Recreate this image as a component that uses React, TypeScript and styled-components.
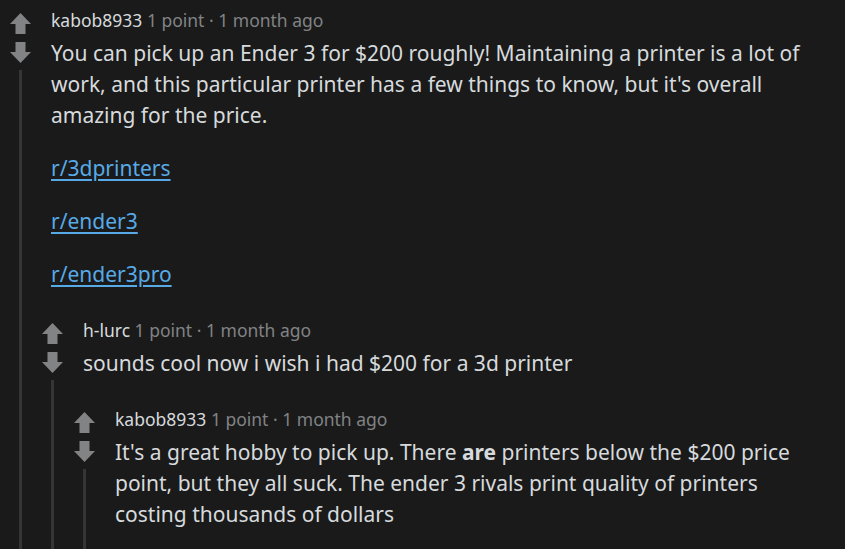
import React from "react";
import styled, { createGlobalStyle } from "styled-components";

const Global = createGlobalStyle`
  html, body {
    margin: 0;
    padding: 0;
    background: #1a1a1b;
    overflow: hidden;
  }
  body {
    font-family: "Noto Sans", "Open Sans", sans-serif;
    color: #d7dadc;
  }
`;

const Page = styled.div`
  padding-top: 2px;
  height: 549px;
  overflow: hidden;
`;

const CommentRow = styled.div`
  display: flex;
  align-items: stretch;
`;

const Rail = styled.div`
  width: 32px;
  flex: none;
  display: flex;
  flex-direction: column;
  align-items: flex-start;
  padding-top: 11px;
  box-sizing: border-box;
`;

const ArrowBtn = styled.svg`
  display: block;
  margin-left: 10px;
  width: 21px;
  height: 21px;
  fill: #818384;
`;

const DownBtn = styled(ArrowBtn)`
  margin-top: 8px;
`;

const ThreadLine = styled.div`
  margin-top: 7px;
  margin-left: 19px;
  width: 3px;
  flex: 1;
  background: #343536;
`;

const Main = styled.div`
  flex: 1;
  min-width: 0;
  padding-top: 6px;
`;

const Inner = styled.div`
  padding-left: 19px;
`;

const Meta = styled.div`
  font-size: 17.5px;
  line-height: 24px;
  color: #818384;
  white-space: nowrap;
`;

const Author = styled.span`
  color: #d7dadc;
`;

const Body = styled.div`
  margin-top: 6px;
  font-size: 21px;
  line-height: 31px;
  color: #d7dadc;
  padding-right: 20px;
`;

const Para = styled.p`
  margin: 0 0 22px;
`;

const Link = styled.a`
  color: #57aae6;
  text-decoration: underline;
  text-underline-offset: 3px;
`;

const Up = () => (
  <ArrowBtn viewBox="0 0 21 21">
    <polygon points="10.5,0 21,11 15.5,11 15.5,21 5.5,21 5.5,11 0,11" />
  </ArrowBtn>
);

const Down = () => (
  <DownBtn viewBox="0 0 21 21">
    <polygon points="5.5,0 15.5,0 15.5,10 21,10 10.5,21 0,10 5.5,10" />
  </DownBtn>
);

type CommentProps = {
  author: string;
  children: React.ReactNode;
  replies?: React.ReactNode;
};

const Comment = ({ author, children, replies }: CommentProps) => (
  <CommentRow>
    <Rail>
      <Up />
      <Down />
      <ThreadLine />
    </Rail>
    <Main>
      <Inner>
        <Meta>
          <Author>{author}</Author> 1 point · 1 month ago
        </Meta>
        <Body>{children}</Body>
      </Inner>
      {replies}
    </Main>
  </CommentRow>
);

export default function App() {
  return (
    <>
      <Global />
      <Page>
        <Comment
          author="kabob8933"
          replies={
            <Comment
              author="h-lurc"
              replies={
                <Comment author="kabob8933">
                  <Para>
                    It's a great hobby to pick up. There <b>are</b> printers below the $200 price
                    point, but they all suck. The ender 3 rivals print quality of printers costing
                    thousands of dollars
                  </Para>
                </Comment>
              }
            >
              <Para>sounds cool now i wish i had $200 for a 3d printer</Para>
            </Comment>
          }
        >
          <Para>
            You can pick up an Ender 3 for $200 roughly! Maintaining a printer is a lot of work,
            and this particular printer has a few things to know, but it's overall amazing for the
            price.
          </Para>
          <Para>
            <Link href="#">r/3dprinters</Link>
          </Para>
          <Para>
            <Link href="#">r/ender3</Link>
          </Para>
          <Para>
            <Link href="#">r/ender3pro</Link>
          </Para>
        </Comment>
      </Page>
    </>
  );
}
